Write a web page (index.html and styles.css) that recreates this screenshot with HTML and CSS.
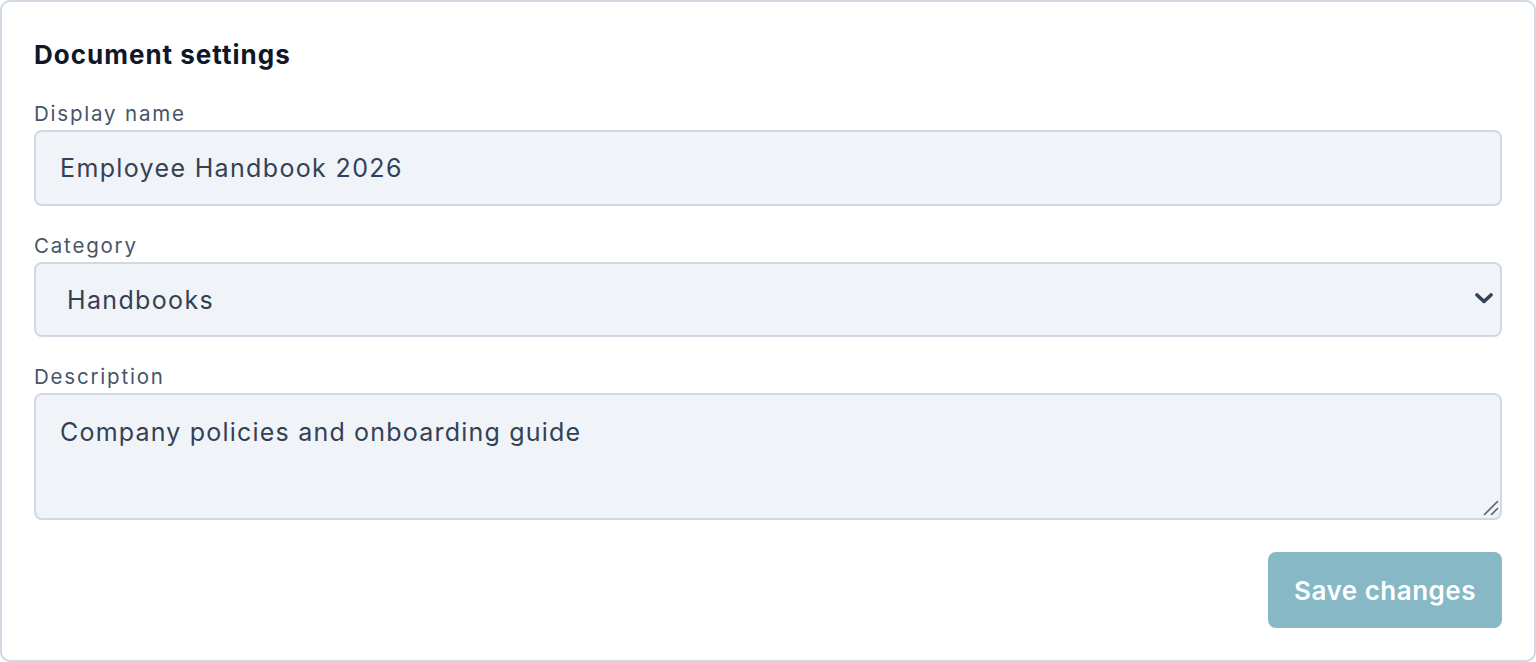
FILE: index.html
```html
<!DOCTYPE html>
<html lang="en">
<head>
<meta charset="utf-8">
<title>Document settings</title>
<link rel="stylesheet" href="styles.css">
</head>
<body>
<form class="card">
  <h2 class="card-title">Document settings</h2>
  <div class="field">
    <label class="field-label" for="name">Display name</label>
    <input class="control" id="name" type="text" value="Employee Handbook 2026">
  </div>
  <div class="field">
    <label class="field-label" for="cat">Category</label>
    <div class="select-wrap">
      <select class="control select" id="cat">
        <option>Handbooks</option>
        <option>Policies</option>
        <option>Guides</option>
      </select>
      <svg class="chevron" width="18" height="11" viewBox="0 0 18 11" aria-hidden="true">
        <path d="M2 2 L9 8.5 L16 2" fill="none" stroke="#334155" stroke-width="3.6" stroke-linecap="round" stroke-linejoin="round"/>
      </svg>
    </div>
  </div>
  <div class="field field-last">
    <label class="field-label" for="desc">Description</label>
    <div class="textarea-wrap">
      <textarea class="control textarea" id="desc">Company policies and onboarding guide</textarea>
      <svg class="grip" width="16" height="16" viewBox="0 0 16 16" aria-hidden="true">
        <path d="M1.5 14.5 L14.5 1.5 M8.5 14.5 L14.5 8.5" fill="none" stroke="#5b5f66" stroke-width="1.6" stroke-linecap="round"/>
      </svg>
    </div>
  </div>
  <div class="actions">
    <button class="btn" type="button">Save changes</button>
  </div>
</form>
</body>
</html>
```
FILE: styles.css
```css
* { box-sizing: border-box; }
html, body { margin: 0; padding: 0; background: #ffffff; }
body { font-family: Inter, "Noto Sans", "Liberation Sans", sans-serif; }

.card {
  width: 1536px;
  height: 662px;
  border: 2px solid #cfd8e3;
  border-radius: 10px;
  background: #ffffff;
  padding: 32px;
  display: flex;
  flex-direction: column;
}

.card-title {
  margin: 5px 0 30px;
  font-size: 26px;
  line-height: 32px;
  font-weight: 700;
  letter-spacing: 1px;
  color: #0f172a;
}

.field {
  display: flex;
  flex-direction: column;
  gap: 3px;
  margin-bottom: 27px;
}
.field-last { margin-bottom: 0; }

.field-label {
  font-size: 20.5px;
  line-height: 26px;
  letter-spacing: 1.8px;
  color: #475569;
}

.control {
  display: block;
  width: 100%;
  height: 76px;
  border: 2px solid #cfd8e3;
  border-radius: 8px;
  background: #f0f4f9;
  color: #334155;
  font-family: inherit;
  font-size: 25px;
  letter-spacing: 1.35px;
  padding: 0 24px;
  outline: none;
}

.select-wrap { position: relative; }
.select {
  height: 75px;
  appearance: none;
  -webkit-appearance: none;
  padding-left: 31px;
}
.chevron {
  position: absolute;
  right: 9px;
  top: 31px;
  pointer-events: none;
}

.textarea-wrap { position: relative; }
.textarea {
  height: 127px;
  padding: 22px 24px 18px;
  line-height: 1.25;
  letter-spacing: 1.2px;
  resize: none;
}
.grip {
  position: absolute;
  right: 3px;
  bottom: 4px;
  pointer-events: none;
}

.actions {
  display: flex;
  justify-content: flex-end;
  margin-top: 32px;
}

.btn {
  height: 76px;
  padding: 0 26px;
  border: none;
  border-radius: 8px;
  background: #86b8c6;
  color: #ffffff;
  font-family: inherit;
  font-size: 26px;
  font-weight: 600;
  letter-spacing: 0.5px;
  cursor: pointer;
}
```
